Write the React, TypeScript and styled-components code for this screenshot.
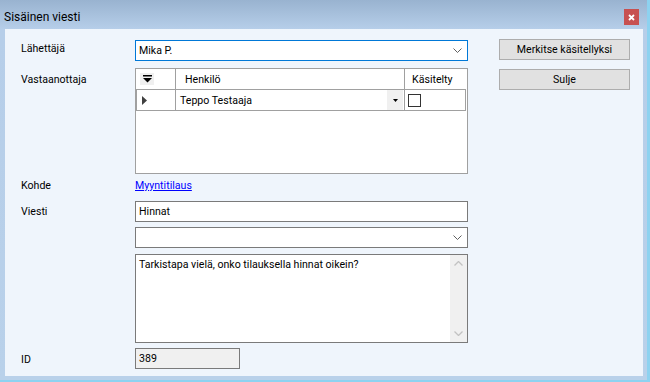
import React from 'react';
import styled, { createGlobalStyle } from 'styled-components';

const GlobalStyle = createGlobalStyle`
  html, body {
    margin: 0;
    padding: 0;
    background: #8dd2f0;
  }
  body {
    font-family: Roboto, 'Liberation Sans', sans-serif;
    font-size: 10.6px;
    color: #000;
  }
`;

const Frame = styled.div`
  width: 647px;
  height: 380px;
  display: flex;
  flex-direction: column;
  background: linear-gradient(#99b3d0 0, #b6cee9 29px, #b9d1ea 100%);
`;

const TitleBar = styled.div`
  height: 29px;
  box-sizing: border-box;
  padding: 9px 8px 0 4px;
  display: flex;
  justify-content: space-between;
  align-items: flex-start;
`;

const Title = styled.span`
  font-size: 12px;
  line-height: 16px;
`;

const CloseButton = styled.div`
  width: 15px;
  height: 16px;
  background: #c75050;
  display: flex;
  align-items: center;
  justify-content: center;
`;

const Client = styled.div`
  flex: 1;
  margin: 0 4px 4px 5px;
  padding: 11px 0 0 16px;
  background: #eff5fc;
  display: flex;
  align-items: flex-start;
`;

const Main = styled.div`
  display: flex;
  flex-direction: column;
`;

const FormRow = styled.div<{ $gap?: number }>`
  display: grid;
  grid-template-columns: 114px 333px;
  margin-top: ${(p) => p.$gap ?? 0}px;
`;

const Label = styled.span<{ $offset?: number }>`
  line-height: 15px;
  padding-top: ${(p) => p.$offset ?? 0}px;
`;

const Field = styled.div<{ $focused?: boolean; $width?: number; $disabled?: boolean }>`
  box-sizing: border-box;
  height: 21px;
  width: ${(p) => (p.$width ? `${p.$width}px` : '100%')};
  border: 1px solid ${(p) => (p.$focused ? '#0078d7' : '#7a7a7a')};
  background: ${(p) => (p.$disabled ? '#f0f0f0' : '#fff')};
  padding: 0 3px;
  display: flex;
  align-items: center;
  justify-content: space-between;
  line-height: 15px;
`;

const Chevron = styled.svg`
  margin-right: 2px;
  flex: none;
`;

const Grid = styled.div`
  box-sizing: border-box;
  height: 106px;
  border: 1px solid #a0a0a0;
  background: #fff;
  display: grid;
  grid-template-columns: 40px 229px 61px;
  grid-auto-rows: 21px;
  align-content: start;
`;

const Cell = styled.div<{ $last?: boolean; $pad?: number }>`
  box-sizing: border-box;
  border-bottom: 1px solid #a0a0a0;
  border-right: ${(p) => (p.$last ? 'none' : '1px solid #a0a0a0')};
  display: flex;
  align-items: center;
  padding-left: ${(p) => p.$pad ?? 0}px;
  line-height: 15px;
  position: relative;
`;

const RowHeadCell = styled(Cell)`
  border-left: 1px solid #a0a0a0;
`;

const FilterBox = styled.div`
  width: 14px;
  height: 12px;
  background: #f0f0f0;
  display: flex;
  align-items: center;
  justify-content: center;
`;

const CellDropButton = styled.div`
  position: absolute;
  right: 1px;
  top: 0;
  bottom: 0;
  width: 16px;
  background: #f0f0f0;
  display: flex;
  align-items: center;
  justify-content: center;
`;

const CheckBox = styled.div`
  width: 13px;
  height: 13px;
  box-sizing: border-box;
  border: 1px solid #333;
  background: #fff;
`;

const Link = styled.a`
  color: #0000ff;
  text-decoration: underline;
  line-height: 15px;
  cursor: pointer;
`;

const MemoBox = styled.div`
  box-sizing: border-box;
  height: 89px;
  border: 1px solid #7a7a7a;
  background: #fff;
  display: flex;
`;

const MemoText = styled.div`
  flex: 1;
  padding: 2px 3px;
  line-height: 15px;
`;

const ScrollBar = styled.div`
  width: 17px;
  background: #f0f0f0;
  display: flex;
  flex-direction: column;
  justify-content: space-between;
  align-items: center;
  padding: 6px 0;
`;

const Side = styled.div`
  margin-left: 31px;
  margin-top: -1px;
  display: flex;
  flex-direction: column;
  gap: 9px;
`;

const Button = styled.button`
  box-sizing: border-box;
  width: 131px;
  height: 21px;
  border: 1px solid #adadad;
  background: #e1e1e1;
  font: inherit;
  color: #000;
  padding: 0;
`;

const ComboChevron = () => (
  <Chevron width="9" height="5" viewBox="0 0 9 5">
    <path d="M0.5 0.5 L4.5 4.5 L8.5 0.5" fill="none" stroke="#606060" strokeWidth="1" />
  </Chevron>
);

const ScrollArrow = ({ up }: { up?: boolean }) => (
  <svg width="9" height="5" viewBox="0 0 9 5">
    <path
      d={up ? 'M0.5 4.5 L4.5 0.5 L8.5 4.5' : 'M0.5 0.5 L4.5 4.5 L8.5 0.5'}
      fill="none"
      stroke="#c2c2c2"
      strokeWidth="1.3"
    />
  </svg>
);

const App = () => {
  return (
    <>
      <GlobalStyle />
      <Frame>
        <TitleBar>
          <Title>Sisäinen viesti</Title>
          <CloseButton>
            <svg width="7" height="7" viewBox="0 0 7 7">
              <path d="M1 1 L6 6 M6 1 L1 6" stroke="#fff" strokeWidth="1.8" />
            </svg>
          </CloseButton>
        </TitleBar>
        <Client>
          <Main>
            <FormRow>
              <Label $offset={1}>Lähettäjä</Label>
              <Field $focused>
                <span>Mika P.</span>
                <ComboChevron />
              </Field>
            </FormRow>
            <FormRow $gap={7}>
              <Label $offset={4}>Vastaanottaja</Label>
              <Grid>
                <Cell $pad={4}>
                  <FilterBox>
                    <svg width="9" height="8" viewBox="0 0 9 8">
                      <rect x="0" y="0" width="9" height="1.5" fill="#000" />
                      <path d="M0 3 L9 3 L4.5 7.5 Z" fill="#000" />
                    </svg>
                  </FilterBox>
                </Cell>
                <Cell $pad={9}>Henkilö</Cell>
                <Cell $pad={7} $last>
                  Käsitelty
                </Cell>
                <RowHeadCell $pad={5}>
                  <svg width="5" height="9" viewBox="0 0 5 9">
                    <path d="M0 0 L5 4.5 L0 9 Z" fill="#404040" />
                  </svg>
                </RowHeadCell>
                <Cell $pad={4}>
                  Teppo Testaaja
                  <CellDropButton>
                    <svg width="5" height="3" viewBox="0 0 5 3">
                      <path d="M0 0 L5 0 L2.5 3 Z" fill="#000" />
                    </svg>
                  </CellDropButton>
                </Cell>
                <Cell $pad={3}>
                  <CheckBox />
                </Cell>
              </Grid>
            </FormRow>
            <FormRow $gap={4}>
              <Label>Kohde</Label>
              <span>
                <Link>Myyntitilaus</Link>
              </span>
            </FormRow>
            <FormRow $gap={8}>
              <Label $offset={3}>Viesti</Label>
              <Field>
                <span>Hinnat</span>
              </Field>
            </FormRow>
            <FormRow $gap={5}>
              <span />
              <Field>
                <span />
                <ComboChevron />
              </Field>
            </FormRow>
            <FormRow $gap={6}>
              <span />
              <MemoBox>
                <MemoText>Tarkistapa vielä, onko tilauksella hinnat oikein?</MemoText>
                <ScrollBar>
                  <ScrollArrow up />
                  <ScrollArrow />
                </ScrollBar>
              </MemoBox>
            </FormRow>
            <FormRow $gap={5}>
              <Label $offset={4}>ID</Label>
              <Field $width={105} $disabled>
                <span>389</span>
              </Field>
            </FormRow>
          </Main>
          <Side>
            <Button>Merkitse käsitellyksi</Button>
            <Button>Sulje</Button>
          </Side>
        </Client>
      </Frame>
    </>
  );
};

export default App;
